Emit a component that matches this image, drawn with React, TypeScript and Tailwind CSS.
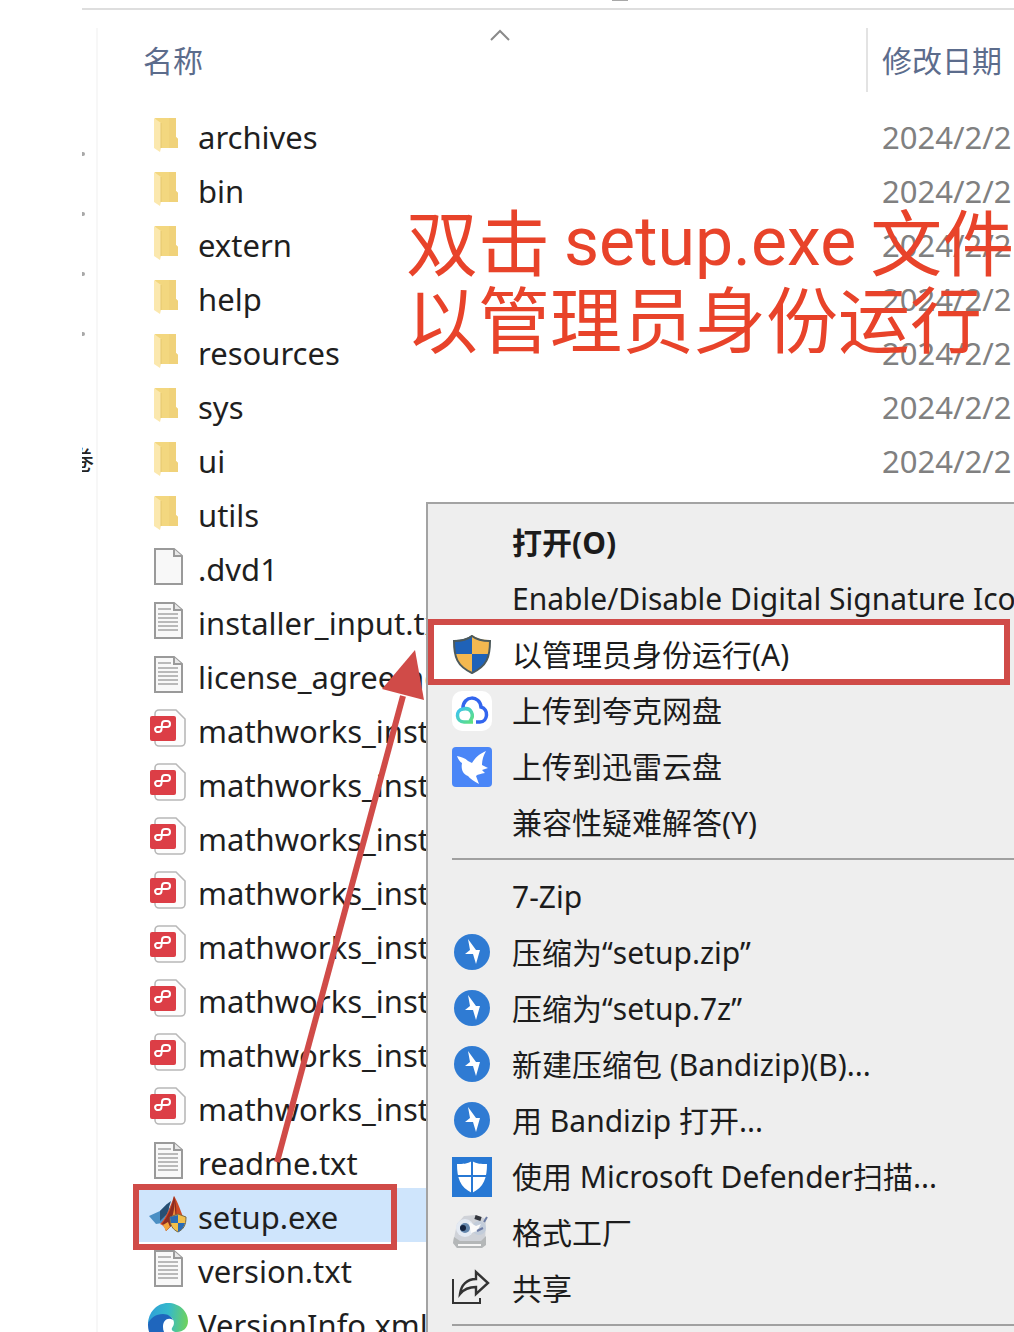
import React from 'react';

type IconName =
  | 'folder'
  | 'blank'
  | 'text'
  | 'prf'
  | 'matlab'
  | 'edge'
  | 'shield'
  | 'quark'
  | 'xunlei'
  | 'bandizip'
  | 'defender'
  | 'factory'
  | 'share';

interface FileEntry {
  name: string;
  icon: IconName;
  selected?: boolean;
}

interface MenuEntry {
  label?: string;
  icon?: IconName;
  bold?: boolean;
  highlighted?: boolean;
  separator?: boolean;
}

const files: FileEntry[] = [
  { name: 'archives', icon: 'folder' },
  { name: 'bin', icon: 'folder' },
  { name: 'extern', icon: 'folder' },
  { name: 'help', icon: 'folder' },
  { name: 'resources', icon: 'folder' },
  { name: 'sys', icon: 'folder' },
  { name: 'ui', icon: 'folder' },
  { name: 'utils', icon: 'folder' },
  { name: '.dvd1', icon: 'blank' },
  { name: 'installer_input.txt', icon: 'text' },
  { name: 'license_agreement.txt', icon: 'text' },
  ...Array.from({ length: 8 }, (): FileEntry => ({ name: 'mathworks_installer', icon: 'prf' })),
  { name: 'readme.txt', icon: 'text' },
  { name: 'setup.exe', icon: 'matlab', selected: true },
  { name: 'version.txt', icon: 'text' },
  { name: 'VersionInfo.xml', icon: 'edge' },
];

const menuEntries: MenuEntry[] = [
  { label: '打开(O)', bold: true },
  { label: 'Enable/Disable Digital Signature Icons' },
  { label: '以管理员身份运行(A)', icon: 'shield', highlighted: true },
  { label: '上传到夸克网盘', icon: 'quark' },
  { label: '上传到迅雷云盘', icon: 'xunlei' },
  { label: '兼容性疑难解答(Y)' },
  { separator: true },
  { label: '7-Zip' },
  { label: '压缩为“setup.zip”', icon: 'bandizip' },
  { label: '压缩为“setup.7z”', icon: 'bandizip' },
  { label: '新建压缩包 (Bandizip)(B)...', icon: 'bandizip' },
  { label: '用 Bandizip 打开...', icon: 'bandizip' },
  { label: '使用 Microsoft Defender扫描...', icon: 'defender' },
  { label: '格式工厂', icon: 'factory' },
  { label: '共享', icon: 'share' },
  { separator: true },
];

const Icon: React.FC<{ name: IconName }> = ({ name }) => {
  const svgProps = { className: 'w-10 h-10 shrink-0', viewBox: '0 0 40 40', fill: 'none', 'aria-hidden': true };

  switch (name) {
    case 'folder':
      return (
        <svg {...svgProps}>
          <path d="M7 3h21v19l2 2v9H12z" fill="#f3d77f" />
          <path d="M21 3h7v19l2 2v9h-9z" fill="#f0d27a" />
          <path d="M6 3l7 5v25l-1 4-6-4z" fill="#fbe8ae" />
          <path d="M13 8v25" stroke="#e6c86e" />
        </svg>
      );
    case 'blank':
    case 'text':
      return (
        <svg {...svgProps}>
          <path d="M7 2h19l8 7v28H7z" fill="#f8f8f8" stroke="#9a9a9a" strokeWidth="2" />
          <path d="M26 2v7h8" fill="#e8e8e8" stroke="#9a9a9a" strokeWidth="2" />
          {name === 'text' && (
            <path d="M10 8h13M10 13h20M10 17h20M10 21h20M10 25h20M10 29h20" stroke="#a4a4a4" strokeWidth="1.6" />
          )}
        </svg>
      );
    case 'prf':
      return (
        <svg {...svgProps}>
          <path d="M11 1h17l9 9v23a4 4 0 01-4 4H11a4 4 0 01-4-4V5a4 4 0 014-4z" fill="#fdfdfd" stroke="#b8b8b8" strokeWidth="1.6" />
          <rect x="2" y="7" width="26" height="25" rx="2" fill="#dc3e46" />
          <path
            d="M9 18h10a3 3 0 000-6h-2c-2 0-3 1-3 3l-.5 5c0 2-1.500 3-3 3a2.500 2.500 0 01-1.500-5z"
            stroke="#fff"
            strokeWidth="2"
            strokeLinejoin="round"
          />
        </svg>
      );
    case 'matlab':
      return (
        <svg {...svgProps}>
          <path d="M1 21l11-5 7-7 3 5-8 14-6 1z" fill="#4b8fc4" />
          <path d="M12 16l7-7 4-3-4 13-7 7z" fill="#274f73" />
          <path d="M12 29c4-3 9-13 14-28 4 6 7 16 11 26l-8 5c-4-5-7 1-11 4-1-4-3-6-6-7z" fill="#cf4a24" />
          <path d="M26 1c-2 10-5 19-12 28 3 0 3 3 4 7 4-3 5-7 9-7 2-8 2-18-1-28z" fill="#8c2c22" />
          <path d="M26 2c1 8 0 18-4 25l6 1z" fill="#ef8a3a" />
          <path d="M15 30l5-3 2 5-4 4z" fill="#f3a53c" />
          <path d="M22 22l8-3 8 3c0 8-2 12-8 15-6-3-8-7-8-15z" fill="#f1bf4b" stroke="#7b6a42" />
          <path d="M30 20v8h-7l-1-6zM30 28h7c-1 4-3 7-7 9z" fill="#2a6bb5" />
        </svg>
      );
    case 'edge':
      return (
        <svg {...svgProps}>
          <defs>
            <linearGradient id="edge-top" x1="0" y1="10" x2="40" y2="14" gradientUnits="userSpaceOnUse">
              <stop offset="0" stopColor="#2f9fd8" />
              <stop offset="0.5" stopColor="#35b9cb" />
              <stop offset="1" stopColor="#6fd25c" />
            </linearGradient>
          </defs>
          <path d="M0 22C0 9 9 0 20 0s20 8 20 18c0 7-5 11-11 11-4 0-6-2-5-4 5-6 0-13-8-13-8 0-14 5-16 10z" fill="url(#edge-top)" />
          <path d="M0 21c2-6 8-10 15-10 5 0 9 3 10 6-5-3-10 0-10 7 0 8 7 13 16 12-4 4-20 7-27-2-3-3-4-8-4-13z" fill="#1f66bd" />
        </svg>
      );
    case 'shield':
      return (
        <svg {...svgProps}>
          <path d="M20 0c5 4 11 5 18 5 0 17-3 26-18 33C5 31 2 22 2 5c7 0 13-1 18-5z" fill="#f4b850" />
          <path d="M20 0v19H3C2 15 2 10 2 5c7 0 13-1 18-5zM20 19h17c-2 9-7 15-17 19z" fill="#1f62b8" />
          <path d="M20 1c5 4 11 5 18 5 0 16-3 25-18 32C5 31 2 22 2 6c7 0 13-1 18-5z" stroke="#4d5a5c" strokeWidth="2" />
        </svg>
      );
    case 'quark':
      return (
        <svg {...svgProps}>
          <defs>
            <linearGradient id="quark-loop" x1="6" y1="18" x2="20" y2="32" gradientUnits="userSpaceOnUse">
              <stop offset="0" stopColor="#3cc3ef" />
              <stop offset="1" stopColor="#5fe27c" />
            </linearGradient>
          </defs>
          <rect width="40" height="40" rx="10" fill="#fff" />
          <path d="M11 17C11 4 28 4 29 16c8 2 7 15-1 15h-4" stroke="#3265ee" strokeWidth="3.500" />
          <path d="M21 31h-9c-8 0-9-12-1-13 8-2 12 6 7 12" stroke="url(#quark-loop)" strokeWidth="3.500" />
        </svg>
      );
    case 'xunlei':
      return (
        <svg {...svgProps}>
          <rect width="40" height="40" rx="4" fill="#4a86f7" />
          <path d="M5 9c4 1 8 2 11 5l4 2c3-5 7-9 14-12-3 5-4 10-4 14l6 3-6 2 3 3c-4 1-7 1-9 3l3 8c-5-3-9-5-11-8-6-2-7-8-6-13-2-1-4-4-5-7z" fill="#fff" />
        </svg>
      );
    case 'bandizip':
      return (
        <svg {...svgProps}>
          <circle cx="20" cy="19" r="18" fill="#2f7bd3" />
          <path d="M16 6l8 11h4l-4 14-3-10h-8l5-4z" fill="#fff" />
        </svg>
      );
    case 'defender':
      return (
        <svg {...svgProps}>
          <path d="M0 0h40v40H0z" fill="#2778d4" />
          <path d="M20 4c5 3 9 3 15 3 0 14-3 23-15 29C8 30 5 21 5 7c6 0 10 0 15-3z" fill="#fff" />
          <path d="M20 3v34M4 19h32" stroke="#2778d4" strokeWidth="2" />
        </svg>
      );
    case 'factory':
      return (
        <svg {...svgProps}>
          <path d="M5 11l7-8 12-1 10 4-1 25-4 4H5l-4-5z" fill="#cfd2d8" />
          <path d="M2 24l6 4h21l5-5v9l-4 3H5l-4-5z" fill="#b4b7b8" />
          <path d="M6 32h23" stroke="#f7f7f7" strokeWidth="2" />
          <circle cx="13" cy="15" r="9" fill="#e4eaf3" />
          <circle cx="27" cy="15" r="7" fill="#c2ccda" />
          <circle cx="13" cy="15" r="5" fill="#6487ad" />
          <circle cx="11" cy="15" r="3" fill="#142440" />
          <path d="M17 9l7 4 5-2-4 7-6 2z" fill="#fafafa" />
          <path d="M23 4l6 2" stroke="#33363d" strokeWidth="4" />
          <path d="M32 9l3-5M25 18l6-3" stroke="#6b7ba4" strokeWidth="2" />
        </svg>
      );
    case 'share':
      return (
        <svg {...svgProps}>
          <path d="M1 10v24h27v-5" stroke="#333" strokeWidth="2" />
          <path d="M8 25c1-9 7-15 16-15V3l12 11-12 11v-7c-8 0-12 2-16 7z" stroke="#333" strokeWidth="2.400" />
        </svg>
      );
  }
};

const SidebarStrip: React.FC = () => (
  <aside className="w-4 shrink-0 border-r-2 border-[#f7f7f7] overflow-hidden pt-30">
    {[0, 1, 2, 3].map((i) => (
      <div key={i} className="h-15 pt-1">
        <div className="w-[3px] h-1 bg-[#a8a8a8] rounded-r-sm" />
      </div>
    ))}
    <div className="flex justify-end w-3 mt-12 overflow-hidden text-[26px] leading-12 text-[#222]">
      <span>卷</span>
    </div>
  </aside>
);

const FileRow: React.FC<{ file: FileEntry }> = ({ file }) => (
  <tr className={file.selected ? 'h-[54px] bg-[#cfe5fc]' : 'h-[54px]'}>
    <td className="relative p-0 pl-[15px]">
      <div className="flex items-center gap-[10px]">
        <Icon name={file.icon} />
        <span className="text-[31px] leading-10 text-[#1f1f1f] whitespace-nowrap pt-1">{file.name}</span>
      </div>
      {file.selected && (
        <div className="absolute left-0 -top-1 -bottom-2 w-[264px] border-[6px] border-[#d04b48]" />
      )}
    </td>
    <td className="p-0 pl-[14px] pt-1 text-[31px] leading-10 text-[#808080] whitespace-nowrap">2024/2/2</td>
  </tr>
);

const FileTable: React.FC = () => (
  <table className="w-full table-fixed border-collapse text-left">
    <thead>
      <tr className="h-20 align-top text-[30px] text-[#5c6c8c]">
        <th className="p-0 font-normal">
          <div className="relative flex items-center h-16 pl-[10px] border-r-2 border-[#e3e3e3]">
            名称
            <svg className="absolute top-0 left-1/2 -translate-x-1/2 w-5 h-4" viewBox="0 0 20 16" fill="none" aria-hidden>
              <path d="M1 12l9-9 9 9" stroke="#8a8a8a" strokeWidth="2" />
            </svg>
          </div>
        </th>
        <th className="w-[146px] p-0 font-normal">
          <div className="flex items-center h-16 pl-[14px] whitespace-nowrap">修改日期</div>
        </th>
      </tr>
    </thead>
    <tbody>
      {files.map((file, i) => (
        <FileRow key={i} file={file} />
      ))}
    </tbody>
  </table>
);

const ContextMenu: React.FC = () => (
  <div
    role="menu"
    className="absolute left-[426px] right-0 top-[502px] bottom-0 pt-[11px] border-l-2 border-t-2 border-[#a3a3a3] bg-[#eee] text-[#1c1c1c] overflow-hidden"
  >
    {menuEntries.map((entry, i) =>
      entry.separator ? (
        <div key={i} role="separator" className="h-[18px] pt-[7px] pl-6">
          <div className="h-[2px] bg-[#a0a0a0]" />
        </div>
      ) : (
        <button
          key={i}
          type="button"
          role="menuitem"
          className="relative flex items-center w-full h-14 pl-6 gap-5 text-left"
        >
          {entry.highlighted && (
            <span className="absolute left-0 right-1 -top-2 -bottom-[2px] bg-white border-[6px] border-[#d04b48]" />
          )}
          <span className="relative w-10 h-10 shrink-0">{entry.icon && <Icon name={entry.icon} />}</span>
          <span
            className={
              entry.bold
                ? 'relative whitespace-nowrap text-[30px] leading-10 font-bold'
                : 'relative whitespace-nowrap text-[30px] leading-10'
            }
          >
            {entry.label}
          </span>
        </button>
      )
    )}
  </div>
);

const Annotations: React.FC = () => (
  <>
    <div className="absolute left-[406px] top-[204px] whitespace-nowrap text-[72px] leading-[77px] text-[#e8432a]">
      <p className="flex gap-[14px] h-[77px]">
        <span>双击</span>
        <span className="font-[Roboto] text-[68px]">setup.exe</span>
        <span>文件</span>
      </p>
      <p className="h-[77px]">以管理员身份运行</p>
    </div>
    <svg className="absolute left-[260px] top-[640px] w-[180px] h-[530px]" viewBox="0 0 180 530" fill="none" aria-hidden>
      <path d="M17 522L143 56" stroke="#d04b48" strokeWidth="6" />
      <path d="M155 10l9 50-42-11z" fill="#d04b48" />
    </svg>
  </>
);

export default function App() {
  return (
    <div className="relative h-screen overflow-hidden bg-white pl-[82px] pt-2 font-['Noto_Sans','Noto_Sans_CJK_SC',sans-serif]">
      <div className="absolute left-[612px] top-0 w-4 h-px bg-[#a8a8a8]" />
      <div className="border-t-2 border-[#dedede] pt-[18px]">
        <div className="flex">
          <SidebarStrip />
          <main className="flex-1 min-w-0 pl-[35px]">
            <FileTable />
          </main>
        </div>
      </div>
      <ContextMenu />
      <Annotations />
    </div>
  );
}
